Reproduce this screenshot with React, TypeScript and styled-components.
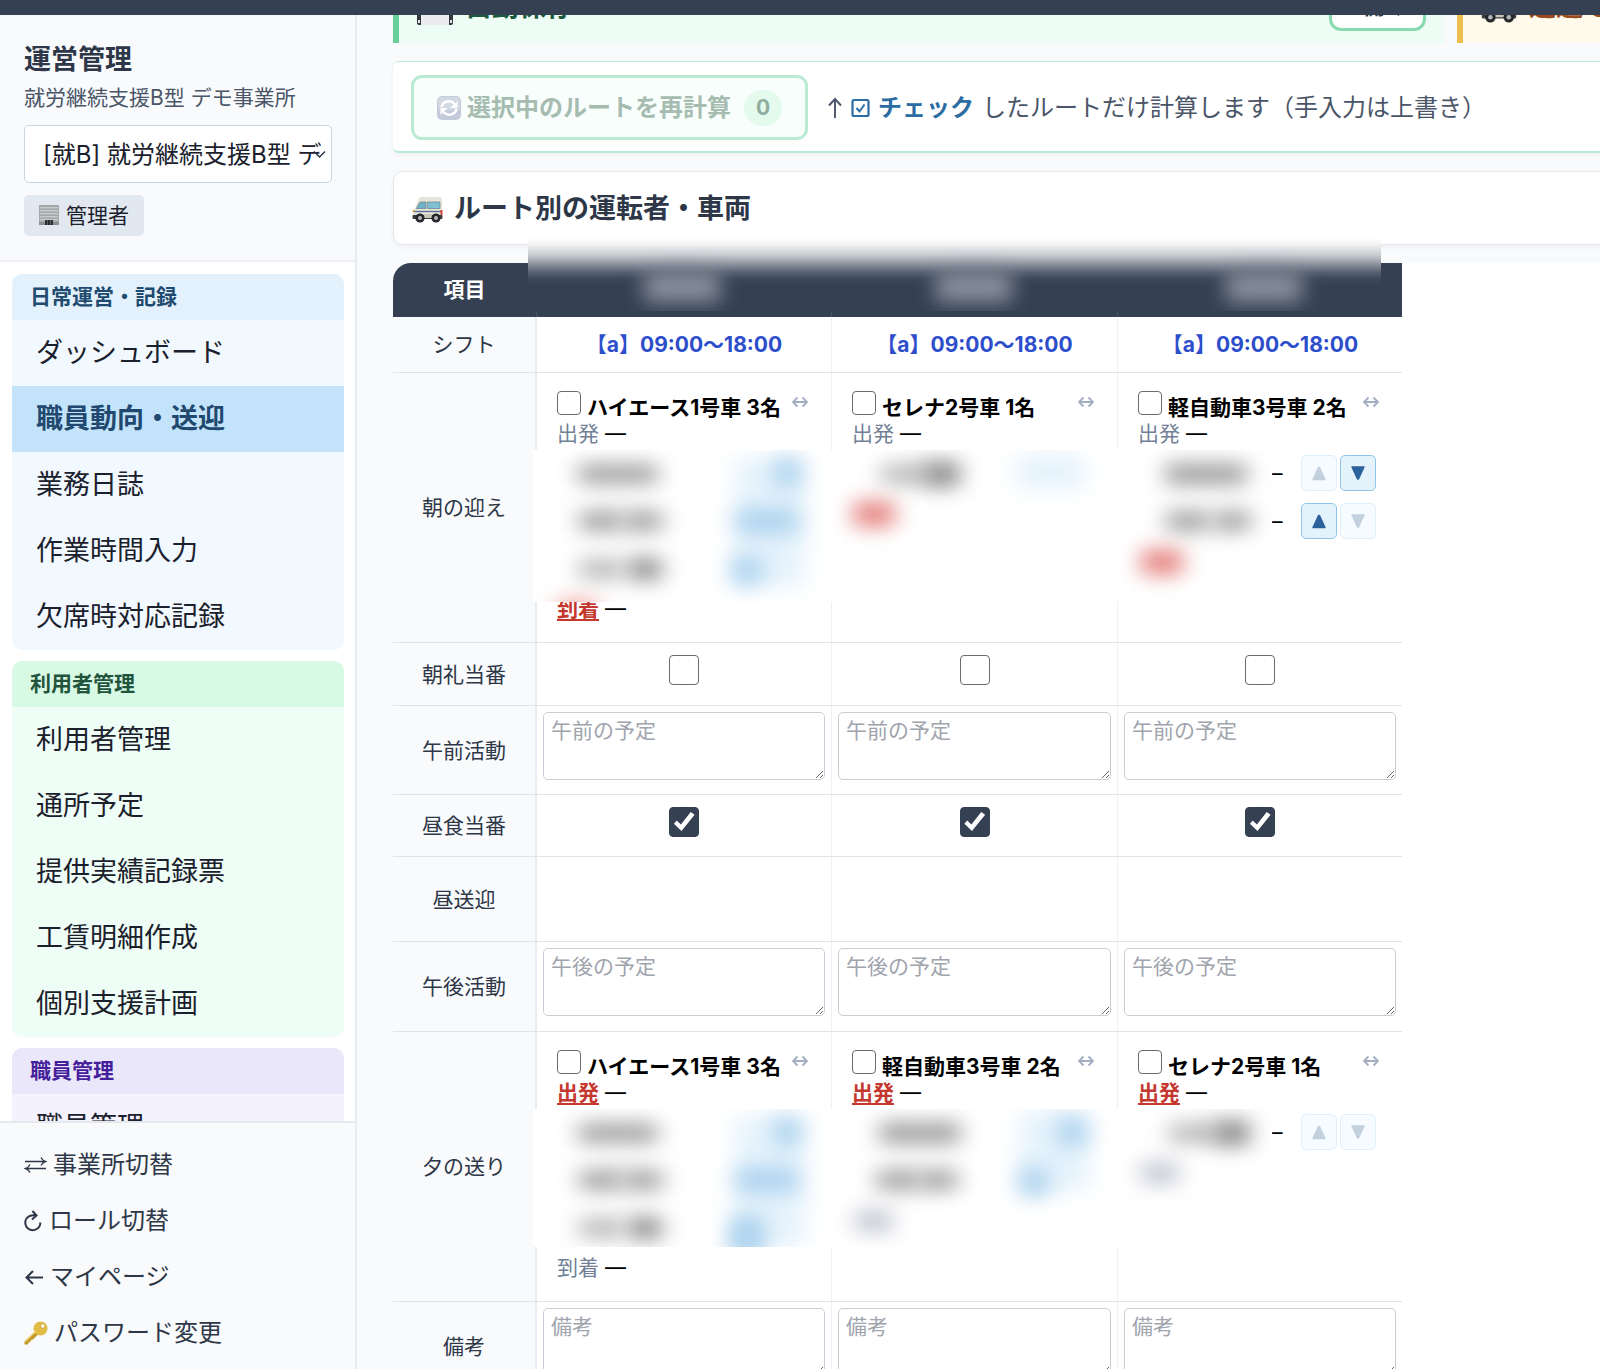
import React, { useId } from "react";
import styled, { createGlobalStyle, css } from "styled-components";

const color = {
  ink: "#1a202c",
  slate: "#2d3748",
  muted: "#4a5568",
  navy: "#354052",
  page: "#f9fafc",
  line: "#e0e3e7",
  red: "#c5382f",
};

const GlobalStyle = createGlobalStyle`
  *, *::before, *::after { box-sizing: border-box; }
  body {
    margin: 0;
    background: ${color.page};
    color: ${color.ink};
    font-family: Inter, "Noto Sans CJK JP", sans-serif;
  }
  button, select, textarea, input { font: inherit; color: inherit; margin: 0; }
  a { color: inherit; text-decoration: none; }
`;

/* ---------- shell ---------- */

const Shell = styled.div`
  display: grid;
  grid-template-columns: 357px minmax(0, 1fr);
  grid-template-rows: 15px minmax(0, 1fr);
  height: 100vh;
  overflow: hidden;
`;

const TopBar = styled.header`
  position: relative;
  z-index: 1;
  grid-column: 1 / -1;
  background: ${color.navy};
`;

/* ---------- sidebar ---------- */

const Sidebar = styled.aside`
  display: flex;
  flex-direction: column;
  min-height: 0;
  background: #fff;
  border-right: 2px solid #e8ebef;
`;

const SideHead = styled.div`
  display: flex;
  flex-direction: column;
  align-items: flex-start;
  padding: 25px 23px 24px 24px;
  background: ${color.page};
  border-bottom: 2px solid #edeff2;
`;

const SideTitle = styled.h1`
  margin: 0;
  font-size: 27px;
  line-height: 40px;
  font-weight: 700;
  color: ${color.slate};
`;

const SideSub = styled.p`
  margin: 2px 0 11px;
  font-size: 21px;
  line-height: 32px;
  color: ${color.muted};
`;

const SelectBox = styled.div`
  position: relative;
  width: 100%;
  svg {
    position: absolute;
    right: 6px;
    top: 25px;
    pointer-events: none;
  }
`;

const OfficeSelect = styled.select`
  appearance: none;
  display: block;
  width: 100%;
  height: 58px;
  padding: 0 10px 0 18px;
  border: 1px solid #cbd5e0;
  border-radius: 5px;
  background: #fff;
  font-size: 24px;
`;

const RoleBadge = styled.span`
  display: flex;
  align-items: center;
  gap: 7px;
  height: 41px;
  margin-top: 12px;
  padding: 0 15px;
  border-radius: 5px;
  background: #e2e8f0;
  font-size: 21px;
  line-height: 32px;
`;

const NavScroll = styled.nav`
  flex: 1;
  min-height: 0;
  overflow: hidden;
  display: flex;
  flex-direction: column;
  gap: 11px;
  padding: 12px 11px 12px 12px;
`;

type Tone = "blue" | "green" | "purple";
const tones = {
  blue: { head: "#e3f1fd", body: "#f1f9ff", text: "#204a6e" },
  green: { head: "#d8f9e4", body: "#eefdf5", text: "#22543d" },
  purple: { head: "#ebe7fb", body: "#f4f2ff", text: "#44209a" },
};

const NavGroup = styled.section<{ $tone: Tone }>`
  flex: none;
  border-radius: 10px;
  overflow: hidden;
  background: ${(p) => tones[p.$tone].body};
  h2 {
    margin: 0;
    padding: 0 18px;
    font-size: 21px;
    line-height: 46px;
    font-weight: 700;
    color: ${(p) => tones[p.$tone].text};
    background: ${(p) => tones[p.$tone].head};
  }
`;

const NavLink = styled.a<{ $active?: boolean }>`
  display: block;
  padding: 0 24px;
  font-size: 27px;
  line-height: 66px;
  ${(p) =>
    p.$active &&
    css`
      background: #c3e3fa;
      color: #21496f;
      font-weight: 700;
    `}
`;

const SideFoot = styled.div`
  flex: none;
  display: flex;
  flex-direction: column;
  padding: 14px 24px 8px;
  border-top: 2px solid #e5e8ec;
  background: ${color.page};
`;

const FootLink = styled.a`
  display: flex;
  align-items: center;
  gap: 6px;
  height: 56px;
  font-size: 24px;
  line-height: 36px;
  color: ${color.slate};
  svg { flex: none; }
`;

/* ---------- main ---------- */

const Main = styled.main`
  min-width: 0;
  padding-left: 36px;
`;

const Stack = styled.div`
  display: flex;
  flex-direction: column;
  gap: 18px;
  min-width: 2115px;
`;

const NoticeRow = styled.div`
  display: grid;
  grid-template-columns: 1fr 1fr;
  grid-template-rows: 28px;
  gap: 13px;
  align-items: end;
`;

const Notice = styled.section<{ $kind: "save" | "ride" }>`
  display: flex;
  align-items: center;
  gap: 12px;
  height: 72px;
  padding: 0 18px;
  background: ${(p) => (p.$kind === "save" ? "#edfdf5" : "#fffaeb")};
  border-left: 6px solid ${(p) => (p.$kind === "save" ? "#68d19a" : "#ecbe4d")};
  color: ${(p) => (p.$kind === "save" ? "#1c5a3c" : "#9a4a1c")};
  h2 {
    flex: 1;
    margin: 0;
    font-size: 27px;
    line-height: 40px;
    font-weight: 700;
  }
`;

const OpenButton = styled.button`
  display: flex;
  align-items: center;
  gap: 5px;
  height: 48px;
  padding: 0 17px;
  border: 3px solid #88dbb0;
  border-radius: 12px;
  background: #fff;
  font-size: 21px;
  line-height: 30px;
  font-weight: 700;
  color: ${color.slate};
`;

const Toolbar = styled.section`
  display: flex;
  align-items: center;
  gap: 19px;
  height: 92px;
  padding: 2px 18px 0;
  background: #fff;
  border: solid #b8ebd2;
  border-width: 1px 0 2px;
  border-radius: 6px;
  box-shadow: 0 2px 4px rgba(45, 55, 72, 0.05);
`;

const RecalcButton = styled.button`
  display: flex;
  align-items: center;
  gap: 6px;
  height: 65px;
  padding: 0 23px;
  border: 3px solid #b9ead3;
  border-radius: 11px;
  background: #f8fefb;
  font-size: 24px;
  line-height: 36px;
  font-weight: 700;
  color: #a6bcb1;
`;

const Count = styled.span`
  display: grid;
  place-items: center;
  width: 38px;
  height: 36px;
  margin-left: 7px;
  border-radius: 18px;
  background: #e3faec;
  font-size: 21px;
  color: #90ad9f;
`;

const Hint = styled.p`
  display: flex;
  align-items: center;
  gap: 8px;
  margin: 0;
  font-size: 24px;
  line-height: 36px;
  color: ${color.muted};
  white-space: nowrap;
  strong { color: #2b6ca3; }
`;

const RouteCard = styled.section`
  display: flex;
  align-items: center;
  gap: 11px;
  height: 74px;
  padding: 2px 18px 0;
  background: #fff;
  border: 1px solid #e4e8ed;
  border-radius: 10px;
  box-shadow: 0 2px 4px rgba(45, 55, 72, 0.06);
  h2 {
    margin: 0;
    font-size: 27px;
    line-height: 40px;
    font-weight: 700;
    color: ${color.slate};
  }
`;

/* ---------- schedule table ---------- */

const TableArea = styled.div`
  background: #fff;
  border-top-left-radius: 18px;
`;

const TableFrame = styled.div`
  position: relative;
  width: 1009px;
`;

const HeadVeil = styled.div`
  position: absolute;
  left: 135px;
  right: 21px;
  top: -25px;
  height: 73px;
  overflow: hidden;
  background: linear-gradient(
    #ffffff 0,
    #f3f4f5 6px,
    #c9ccd1 17px,
    #8e949e 26px,
    #586272 34px,
    #3c4759 41px,
    ${color.navy} 48px
  );
  svg { display: block; width: 100%; height: 100%; }
`;

const Grid = styled.table`
  width: 100%;
  table-layout: fixed;
  border-collapse: separate;
  border-spacing: 0;
  font-size: 21px;
  line-height: 27px;
`;

const HeadCell = styled.th`
  height: 54px;
  padding: 0 0 2px;
  background: ${color.navy};
  border-right: 1px solid #475367;
  color: #fff;
  font-weight: 700;
  &:first-child { border-top-left-radius: 18px; }
  &:last-child { border-right: 0; }
`;

const RowLabel = styled.th`
  padding: 0;
  background: ${color.page};
  border-right: 2px solid #e8ebef;
  border-bottom: 1px solid ${color.line};
  font-weight: 400;
  color: ${color.slate};
`;

const Cell = styled.td`
  padding: 0;
  vertical-align: top;
  border-right: 1px solid #eef0f3;
  border-bottom: 1px solid ${color.line};
  &:last-child { border-right: 0; }
`;

const Row = styled.tr<{ $h: number }>`
  height: ${(p) => p.$h}px;
`;

const Shift = styled.div`
  line-height: 55px;
  font-weight: 700;
  text-align: center;
  color: #2c4ecb;
`;

const Tick = styled.input<{ $size: number }>`
  appearance: none;
  flex: none;
  display: block;
  width: ${(p) => p.$size}px;
  height: ${(p) => p.$size}px;
  border: 1px solid #6b6b6b;
  border-radius: 4px;
  background: #fff;
  &:checked {
    border-color: ${color.navy};
    background: ${color.navy};
  }
  &:checked::before {
    content: "";
    display: block;
    width: 100%;
    height: 100%;
    background: #fff;
    clip-path: polygon(14% 56%, 24% 45%, 39% 59%, 74% 14%, 88% 24%, 41% 82%);
  }
`;

const TickCell = styled.div`
  display: flex;
  justify-content: center;
  padding-top: 12px;
`;

const MemoCell = styled.div`
  padding: 6px 6px 14px;
`;

const Memo = styled.textarea`
  display: block;
  width: 100%;
  height: 68px;
  padding: 4px 7px;
  border: 1px solid #c9ced6;
  border-radius: 5px;
  background: #fff;
  resize: vertical;
  &::placeholder { color: #a0a4ad; opacity: 1; }
`;

const Route = styled.div`
  padding: 18px 23px 0 20px;
`;

const RouteHead = styled.div`
  display: flex;
  align-items: flex-start;
  height: 29px;
  gap: 6px;
  color: #000;
  label {
    flex: 1;
    padding-top: 3px;
    font-weight: 700;
    white-space: nowrap;
  }
`;

const SwapButton = styled.button`
  display: flex;
  padding: 5px 0;
  border: 0;
  background: none;
  color: #a3aec1;
`;

const TimeLine = styled.p<{ $late?: boolean }>`
  display: flex;
  gap: 6px;
  margin: 0;
  color: #000;
  span {
    color: ${(p) => (p.$late ? color.red : "#718096")};
    font-weight: ${(p) => (p.$late ? 700 : 400)};
    text-decoration: ${(p) => (p.$late ? "underline" : "none")};
    text-underline-offset: 3px;
  }
`;

const Stops = styled.div<{ $h: number; $after: number }>`
  display: flex;
  height: ${(p) => p.$h}px;
  margin: 3px -23px ${(p) => p.$after}px -24px;
`;

const Veil = styled.svg<{ $full: boolean }>`
  position: relative;
  flex: none;
  display: block;
  width: ${(p) => (p.$full ? "calc(100% + 1px)" : "158px")};
  height: 100%;
  background: #fff;
`;

const StopList = styled.ul`
  display: flex;
  flex-direction: column;
  gap: 12px;
  margin: 0;
  padding: 5px 0 0;
  list-style: none;
  li {
    display: flex;
    align-items: center;
    gap: 3px;
    color: #000;
  }
  li > span { width: 26px; }
`;

const MoveButton = styled.button`
  display: grid;
  place-items: center;
  width: 36px;
  height: 36px;
  padding: 0;
  border: 1px solid #8fc7ec;
  border-radius: 5px;
  background: #e4f2fc;
  color: #2c629c;
  &:disabled {
    border-color: #dff0fa;
    background: #f5fbff;
    color: #c3d0de;
  }
`;

/* ---------- drawings ---------- */

const BuildingIcon = () => (
  <svg width="20" height="21" viewBox="0 0 20 21" aria-hidden="true">
    <rect x="0" y="0" width="20" height="20" fill="#a3a8a8" />
    {[2, 5, 8, 11, 14].map((y) => (
      <rect key={y} x="1" y={y} width="18" height="1.4" fill="#c6cccd" />
    ))}
    <rect x="0" y="17" width="20" height="3" fill="#8b8f90" />
    <rect x="6" y="15" width="8" height="5" fill="#2b2e33" />
    <path d="M8.5 15v5M11.5 15v5" stroke="#777" strokeWidth="0.7" />
  </svg>
);

const KeyIcon = () => (
  <svg width="24" height="24" viewBox="0 0 24 24" aria-hidden="true">
    <path d="M12 10 0.5 20.5 0.5 23.5 4 23.5 4.5 21.5 6.5 21 7 19 9 18.500 14.500 13z" fill="#c39a27" />
    <circle cx="16.500" cy="7.500" r="7" fill="#e2bd45" />
    <path d="M12 10 1 20.500" stroke="#efd579" strokeWidth="1.200" />
    <circle cx="18.800" cy="5" r="2.200" fill="#fffbe8" stroke="#b58d22" strokeWidth="0.600" />
  </svg>
);

const SwitchIcon = () => (
  <svg width="23" height="18" viewBox="0 0 23 18" fill="none" stroke="currentColor" strokeWidth="1.400" aria-hidden="true">
    <path d="M1 5.500h20M17 1.500q1.500 3 4.500 4q-3 1-4.500 4M22 12.500H2M6 8.500q-1.500 3-4.500 4q3 1 4.500 4" />
  </svg>
);

const ReloadIcon = () => (
  <svg width="19" height="22" viewBox="0 0 19 22" fill="none" stroke="currentColor" strokeWidth="2" aria-hidden="true">
    <path d="M4.500 6.500A7.500 7.500 0 1 0 16.300 12.500M4 7Q7 4.500 11.500 5.500M8.500 1l4 4.500-4.500 4" />
  </svg>
);

const BackIcon = () => (
  <svg width="20" height="18" viewBox="0 0 20 18" fill="none" stroke="currentColor" strokeWidth="2" aria-hidden="true">
    <path d="M19 9.500H3M9 3 2.500 9.500 9 16" />
  </svg>
);

const UpIcon = () => (
  <svg width="16" height="24" viewBox="0 0 16 24" fill="none" stroke="currentColor" strokeWidth="1.900" aria-hidden="true">
    <path d="M8 22V4M2 9.500 8 3l6 6.500" />
  </svg>
);

const CheckedBoxIcon = () => (
  <svg width="19" height="22" viewBox="0 0 19 22" fill="none" stroke="#2b6ca3" strokeWidth="2.200" aria-hidden="true">
    <rect x="1.500" y="3" width="16" height="16" rx="1.500" />
    <path d="M5.500 11 8.500 14.500 13.500 7.500" strokeWidth="2" />
  </svg>
);

const SwapIcon = () => (
  <svg width="16" height="12" viewBox="0 0 16 12" fill="none" stroke="currentColor" strokeWidth="1.900" aria-hidden="true">
    <path d="M1.500 6h13M5.500 1.500 1 6l4.500 4.500M10.500 1.500 15 6l-4.500 4.500" />
  </svg>
);

const Triangle = ({ down, width = 14 }: { down?: boolean; width?: number }) => (
  <svg width={width} height="16" viewBox="0 0 14 16" aria-hidden="true">
    <path
      d={down ? "M1 2h12L7.500 14h-1z" : "M1 14.500h12L7.500 2.500h-1z"}
      fill="currentColor"
      stroke="currentColor"
      strokeWidth="1.400"
      strokeLinejoin="round"
    />
  </svg>
);

const RefreshTile = () => (
  <svg width="24" height="24" viewBox="0 0 24 24" aria-hidden="true">
    <rect width="24" height="24" rx="5" fill="#c3cbdb" />
    <rect x="1" y="1" width="22" height="13" rx="4" fill="#d3d9e4" />
    <path d="M4.500 11A7.500 7.500 0 0 1 17.500 8M19.500 13A7.500 7.500 0 0 1 6.500 16" fill="none" stroke="#fff" strokeWidth="2.600" />
    <path d="M20.500 5v7h-7zM3.500 19v-7h7z" fill="#fff" />
  </svg>
);

const FloppyIcon = () => (
  <svg width="36" height="36" viewBox="0 0 36 36" aria-hidden="true">
    <rect width="36" height="36" rx="2" fill="#33373d" />
    <rect x="9" y="0" width="18" height="11" fill="#b9bec4" />
    <rect x="4" y="15" width="28" height="21" fill="#ececef" />
    <rect x="1" y="31" width="2" height="3" fill="#e7e7e7" />
    <rect x="33" y="31" width="2" height="3" fill="#e7e7e7" />
  </svg>
);

const VanIcon = ({ size = 31 }: { size?: number }) => (
  <svg width={size} height={Math.round((size * 27) / 31)} viewBox="0 0 31 27" aria-hidden="true">
    <path d="M6.500 3Q7.500 1 10.500 1H27q3 0 3 3V20H1v-5Q1 13.500 3 12.500z" fill="#e6e4d8" />
    <path d="M8 6h6v6.500H4.300z" fill="#6fb2c6" stroke="#5b7680" strokeWidth="0.600" />
    <path d="M15.500 6H28v6.500H15.500z" fill="#7fc1d3" stroke="#5b7680" strokeWidth="0.600" />
    <path d="M2 15.500H29" stroke="#5c6c9a" strokeWidth="1.300" />
    <rect x="28.500" y="14" width="2" height="5" fill="#d6433a" />
    <rect x="0.500" y="14" width="2" height="2" fill="#eaa54c" />
    <rect x="0.500" y="19" width="30" height="4" rx="1" fill="#3c3d40" />
    <rect x="12" y="18" width="8" height="4" fill="#c9c6bc" />
    <circle cx="8" cy="22" r="4.600" fill="#26272a" />
    <circle cx="8" cy="22" r="2" fill="#b4b6b8" />
    <circle cx="24" cy="22" r="4.600" fill="#26272a" />
    <circle cx="24" cy="22" r="2" fill="#b4b6b8" />
  </svg>
);

const Chevron = () => (
  <svg width="13" height="9" viewBox="0 0 13 9" fill="none" stroke="#2d3748" strokeWidth="1.500" aria-hidden="true">
    <path d="M1 1.500 6.500 7 12 1.500" />
  </svg>
);

/* ---------- concealed names ---------- */

type Blob = [x: number, y: number, w: number, h: number, fill: string];
const G = "#a0a0a0";
const L = "#b8b8b8";
const D = "#8c8c8c";
const B = "#aed3ee";
const P = "#e6f3fc";

function Concealed({ blobs, full = true }: { blobs: Blob[]; full?: boolean }) {
  const id = useId();
  return (
    <Veil $full={full} aria-hidden="true">
      <filter id={id} filterUnits="userSpaceOnUse" x="-60" y="-60" width="460" height="300" colorInterpolationFilters="sRGB">
        <feGaussianBlur stdDeviation="11 10" />
      </filter>
      {blobs.map(([x, y, w, h, fill], i) => (
        <rect key={i} x={x - w / 2} y={y - h / 2} width={w} height={h} rx="6" fill={fill} filter={`url(#${id})`} />
      ))}
    </Veil>
  );
}

const three: Blob[] = [
  [85, 24, 80, 20, G],
  [237, 72, 70, 130, P],
  [254, 23, 26, 30, B],
  [68, 71, 44, 20, G],
  [110, 71, 40, 20, G],
  [234, 71, 62, 26, B],
  [68, 119, 44, 20, L],
  [112, 119, 34, 22, D],
  [214, 120, 30, 30, B],
];

type Vehicle = {
  name: string;
  late?: "start" | "end";
  end?: boolean;
  blobs: Blob[];
  moves?: [boolean, boolean][];
};

const morning: Vehicle[] = [
  { name: "ハイエース1号車 3名", late: "end", end: true, blobs: [...three, [44, 162, 42, 24, "#f0a8a4"]] },
  {
    name: "セレナ2号車 1名",
    blobs: [
      [78, 24, 50, 20, L],
      [114, 24, 36, 26, D],
      [222, 22, 70, 34, P],
      [46, 64, 42, 26, "#e58582"],
    ],
  },
  {
    name: "軽自動車3号車 2名",
    blobs: [
      [92, 24, 82, 22, G],
      [74, 71, 44, 20, G],
      [118, 71, 38, 20, G],
      [48, 112, 42, 26, "#e58582"],
    ],
    moves: [
      [false, true],
      [true, false],
    ],
  },
];

const evening: Vehicle[] = [
  { name: "ハイエース1号車 3名", late: "start", end: true, blobs: [...three, [214, 134, 30, 24, "#a4cfed"]] },
  {
    name: "軽自動車3号車 2名",
    late: "start",
    blobs: [
      [92, 24, 82, 22, G],
      [226, 42, 70, 80, P],
      [244, 23, 28, 30, B],
      [70, 71, 44, 20, G],
      [110, 71, 40, 20, G],
      [206, 73, 28, 30, B],
      [46, 112, 38, 22, "#c3c6d1"],
    ],
  },
  {
    name: "セレナ2号車 1名",
    late: "start",
    blobs: [
      [80, 24, 50, 20, L],
      [118, 24, 36, 26, D],
      [46, 64, 38, 22, "#c3c6d1"],
    ],
    moves: [[false, false]],
  },
];

type RouteRowProps = { label: string; vehicles: Vehicle[]; veil: number; after: number };

function RouteRow({ label, vehicles, veil, after }: RouteRowProps) {
  const id = useId();
  return (
    <Row $h={270}>
      <RowLabel scope="row">{label}</RowLabel>
      {vehicles.map((v, i) => (
        <Cell key={v.name}>
          <Route>
            <RouteHead>
              <Tick type="checkbox" $size={24} id={`${id}${i}`} />
              <label htmlFor={`${id}${i}`}>{v.name}</label>
              <SwapButton type="button" aria-label="入れ替え">
                <SwapIcon />
              </SwapButton>
            </RouteHead>
            <TimeLine $late={v.late === "start"}>
              <span>出発</span>—
            </TimeLine>
            <Stops $h={veil} $after={after}>
              <Concealed blobs={v.blobs} full={!v.moves} />
              {v.moves && (
                <StopList>
                  {v.moves.map(([up, down], k) => (
                    <li key={k}>
                      <span>–</span>
                      <MoveButton type="button" disabled={!up} aria-label="上へ">
                        <Triangle />
                      </MoveButton>
                      <MoveButton type="button" disabled={!down} aria-label="下へ">
                        <Triangle down />
                      </MoveButton>
                    </li>
                  ))}
                </StopList>
              )}
            </Stops>
            {v.end && (
              <TimeLine $late={v.late === "end"}>
                <span>到着</span>—
              </TimeLine>
            )}
          </Route>
        </Cell>
      ))}
    </Row>
  );
}

const cols = [0, 1, 2];

function TickRow({ label, checked, h }: { label: string; checked: boolean; h: number }) {
  return (
    <Row $h={h}>
      <RowLabel scope="row">{label}</RowLabel>
      {cols.map((c) => (
        <Cell key={c}>
          <TickCell>
            <Tick type="checkbox" $size={30} defaultChecked={checked} aria-label={label} />
          </TickCell>
        </Cell>
      ))}
    </Row>
  );
}

function MemoRow({ label, hint, h }: { label: string; hint: string; h: number }) {
  return (
    <Row $h={h}>
      <RowLabel scope="row">{label}</RowLabel>
      {cols.map((c) => (
        <Cell key={c}>
          <MemoCell>
            <Memo placeholder={hint} aria-label={label} />
          </MemoCell>
        </Cell>
      ))}
    </Row>
  );
}

const groups: { title: string; tone: Tone; items: string[] }[] = [
  {
    title: "日常運営・記録",
    tone: "blue",
    items: ["ダッシュボード", "職員動向・送迎", "業務日誌", "作業時間入力", "欠席時対応記録"],
  },
  {
    title: "利用者管理",
    tone: "green",
    items: ["利用者管理", "通所予定", "提供実績記録票", "工賃明細作成", "個別支援計画"],
  },
  { title: "職員管理", tone: "purple", items: ["職員管理"] },
];

export default function App() {
  return (
    <Shell>
      <GlobalStyle />
      <TopBar />
      <Sidebar>
        <SideHead>
          <SideTitle>運営管理</SideTitle>
          <SideSub>就労継続支援B型 デモ事業所</SideSub>
          <SelectBox>
            <OfficeSelect aria-label="事業所">
              <option>[就B] 就労継続支援B型 デモ事業所</option>
            </OfficeSelect>
            <Chevron />
          </SelectBox>
          <RoleBadge>
            <BuildingIcon />
            管理者
          </RoleBadge>
        </SideHead>
        <NavScroll>
          {groups.map((g) => (
            <NavGroup key={g.title} $tone={g.tone}>
              <h2>{g.title}</h2>
              {g.items.map((item) => (
                <NavLink key={item} href="#" $active={item === "職員動向・送迎"}>
                  {item}
                </NavLink>
              ))}
            </NavGroup>
          ))}
        </NavScroll>
        <SideFoot>
          <FootLink href="#"><SwitchIcon />事業所切替</FootLink>
          <FootLink href="#"><ReloadIcon />ロール切替</FootLink>
          <FootLink href="#"><BackIcon />マイページ</FootLink>
          <FootLink href="#"><KeyIcon />パスワード変更</FootLink>
        </SideFoot>
      </Sidebar>
      <Main>
        <Stack>
          <NoticeRow>
            <Notice $kind="save">
              <FloppyIcon />
              <h2>自動保存</h2>
              <OpenButton type="button">
                <Triangle down width={10} />
                開く
              </OpenButton>
            </Notice>
            <Notice $kind="ride">
              <VanIcon size={36} />
              <h2>送迎モード</h2>
            </Notice>
          </NoticeRow>
          <Toolbar>
            <RecalcButton type="button" disabled>
              <RefreshTile />
              選択中のルートを再計算
              <Count>0</Count>
            </RecalcButton>
            <Hint>
              <UpIcon />
              <CheckedBoxIcon />
              <strong>チェック</strong>
              したルートだけ計算します（手入力は上書き）
            </Hint>
          </Toolbar>
          <RouteCard>
            <VanIcon />
            <h2>ルート別の運転者・車両</h2>
          </RouteCard>
          <TableArea>
            <TableFrame>
              <Grid>
                <colgroup>
                  <col style={{ width: 144 }} />
                  <col style={{ width: 295 }} />
                  <col style={{ width: 286 }} />
                  <col />
                </colgroup>
                <thead>
                  <tr>
                    <HeadCell scope="col">項目</HeadCell>
                    <HeadCell />
                    <HeadCell />
                    <HeadCell />
                  </tr>
                </thead>
                <tbody>
                  <Row $h={56}>
                    <RowLabel scope="row">シフト</RowLabel>
                    {cols.map((c) => (
                      <Cell key={c}>
                        <Shift>【a】09:00〜18:00</Shift>
                      </Cell>
                    ))}
                  </Row>
                  <RouteRow label="朝の迎え" vehicles={morning} veil={152} after={-7} />
                  <TickRow label="朝礼当番" checked={false} h={63} />
                  <MemoRow label="午前活動" hint="午前の予定" h={89} />
                  <TickRow label="昼食当番" checked h={62} />
                  <Row $h={85}>
                    <RowLabel scope="row">昼送迎</RowLabel>
                    {cols.map((c) => (
                      <Cell key={c} />
                    ))}
                  </Row>
                  <MemoRow label="午後活動" hint="午後の予定" h={90} />
                  <RouteRow label="夕の送り" vehicles={evening} veil={138} after={7} />
                  <MemoRow label="備考" hint="備考" h={89} />
                </tbody>
              </Grid>
              <HeadVeil>
                <svg aria-hidden="true">
                  <filter id="headBlur" filterUnits="userSpaceOnUse" x="0" y="-40" width="860" height="200" colorInterpolationFilters="sRGB">
                    <feGaussianBlur stdDeviation="10" />
                  </filter>
                  {[154, 446, 736].map((x) => (
                    <rect key={x} x={x - 38} y="34" width="76" height="30" fill="#8a919e" filter="url(#headBlur)" />
                  ))}
                </svg>
              </HeadVeil>
            </TableFrame>
          </TableArea>
        </Stack>
      </Main>
    </Shell>
  );
}
